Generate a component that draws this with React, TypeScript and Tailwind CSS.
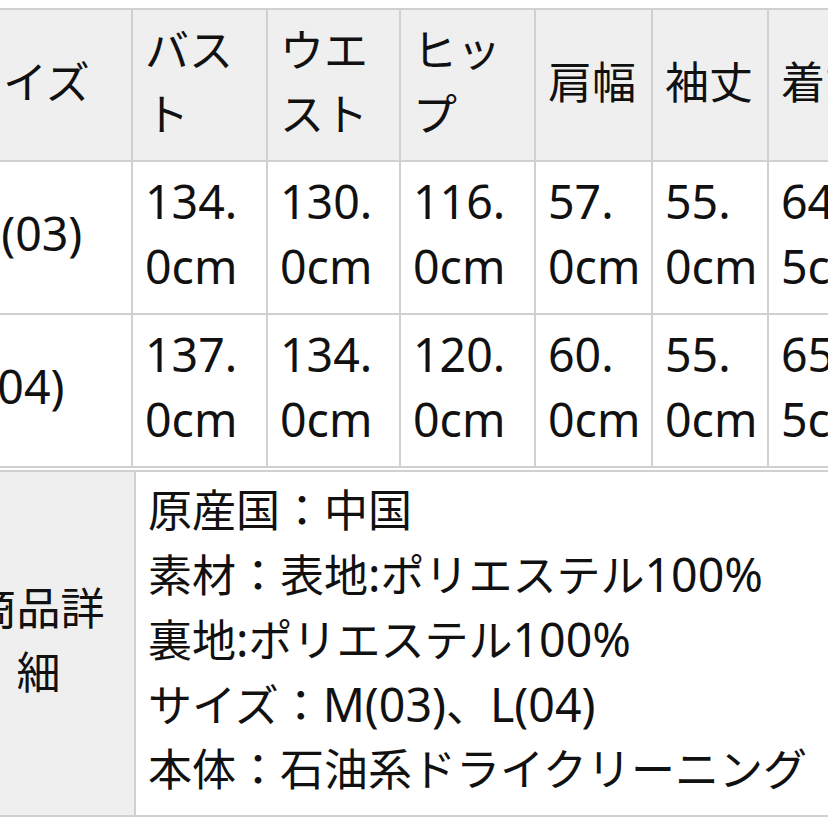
import React from "react";

// header text split into the lines shown
const headers: string[][] = [
  ["サイズ"],
  ["バス", "ト"],
  ["ウエ", "スト"],
  ["ヒッ", "プ"],
  ["肩幅"],
  ["袖丈"],
  ["着丈"],
];

const rows: string[][][] = [
  [["M(03)"], ["134.", "0cm"], ["130.", "0cm"], ["116.", "0cm"], ["57.", "0cm"], ["55.", "0cm"], ["64.", "5cm"]],
  [["L(04)"], ["137.", "0cm"], ["134.", "0cm"], ["120.", "0cm"], ["60.", "0cm"], ["55.", "0cm"], ["65.", "5cm"]],
];

const details = [
  "原産国：中国",
  "素材：表地:ポリエステル100%",
  "裏地:ポリエステル100%",
  "サイズ：M(03)、L(04)",
  "本体：石油系ドライクリーニング",
];

// latin runs are drawn a bit bigger than the kana/kanji, like the phone font
const Text = ({ s }: { s: string }) => (
  <>
    {s.split(/([A-Za-z0-9.():%]+)/).map((part, i) =>
      /^[A-Za-z0-9.():%]+$/.test(part) ? (
        <span key={i} className="text-[46.5px]">
          {part}
        </span>
      ) : (
        <React.Fragment key={i}>{part}</React.Fragment>
      )
    )}
  </>
);

const Lines = ({ lines }: { lines: string[] }) => (
  <>
    {lines.map((l, i) => (
      <div key={i} className="whitespace-nowrap">
        <Text s={l} />
      </div>
    ))}
  </>
);

const App = () => {
  return (
    <div
      className="w-[828px] h-[828px] overflow-hidden bg-white pt-[8px] text-[44px] leading-[64px] text-[#111]"
      style={{ fontFamily: '"Noto Sans", "Noto Sans CJK JP", sans-serif' }}
    >
      {/* size table */}
      <table className="table-fixed border-collapse ml-[-55px] w-[1004px]">
        <colgroup>
          <col className="w-[186px]" />
          <col className="w-[135px]" />
          <col className="w-[133px]" />
          <col className="w-[135px]" />
          <col className="w-[117px]" />
          <col className="w-[116px]" />
          <col className="w-[182px]" />
        </colgroup>
        <thead>
          <tr className="bg-[#efefef]">
            {headers.map((h, i) => (
              <th
                key={i}
                className="h-[152px] border-2 border-[#d0d0d0] pl-[12px] pr-[2px] pb-[6px] text-left font-normal align-middle overflow-hidden"
              >
                <Lines lines={h} />
              </th>
            ))}
          </tr>
        </thead>
        <tbody>
          {rows.map((r, ri) => (
            <tr key={ri}>
              {r.map((c, i) => (
                <td
                  key={i}
                  className="h-[153px] border-2 border-[#d0d0d0] pl-[12px] pr-[2px] pb-[8px] align-middle overflow-hidden"
                >
                  <Lines lines={c} />
                </td>
              ))}
            </tr>
          ))}
        </tbody>
      </table>

      {/* detail table */}
      <table className="table-fixed border-collapse ml-[-59px] w-[900px] mt-[2px]">
        <colgroup>
          <col className="w-[193px]" />
          <col className="w-[707px]" />
        </colgroup>
        <tbody>
          <tr>
            <th className="border-2 border-[#d0d0d0] bg-[#efefef] px-[14px] pb-[8px] font-normal text-center align-middle">
              商品詳細
            </th>
            <td className="h-[345px] border-2 border-[#d0d0d0] pl-[12px] pr-[2px] pt-[6px] align-top">
              <Lines lines={details} />
            </td>
          </tr>
        </tbody>
      </table>
    </div>
  );
};

export default App;
